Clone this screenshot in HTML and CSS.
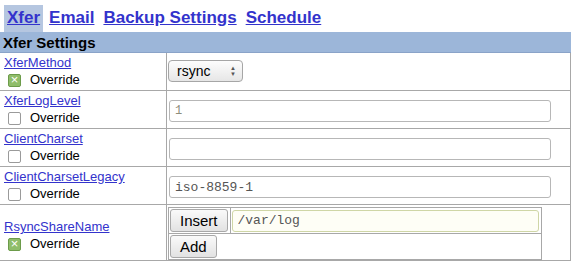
FILE: index.html
```html
<!DOCTYPE html>
<html lang="en">
<head>
    <meta charset="UTF-8">
    <title>Xfer Settings</title>
    <link rel="stylesheet" href="styles.css">
</head>
<body>
    <div class="tabs">
        <a href="#" class="tab active">Xfer</a>
        <a href="#" class="tab">Email</a>
        <a href="#" class="tab">Backup Settings</a>
        <a href="#" class="tab">Schedule</a>
    </div>

    <table class="settings">
        <tr><th colspan="2">Xfer Settings</th></tr>
        <tr>
            <td class="name">
                <a href="#">XferMethod</a>
                <label class="override"><span class="cb checked">&#215;</span>Override</label>
            </td>
            <td class="value">
                <div class="select"><span>rsync</span><span class="arrows">&#9650;<br>&#9660;</span></div>
            </td>
        </tr>
        <tr>
            <td class="name">
                <a href="#">XferLogLevel</a>
                <label class="override"><span class="cb"></span>Override</label>
            </td>
            <td class="value"><input type="text" class="field faded" value="1"></td>
        </tr>
        <tr>
            <td class="name">
                <a href="#">ClientCharset</a>
                <label class="override"><span class="cb"></span>Override</label>
            </td>
            <td class="value"><input type="text" class="field" value=""></td>
        </tr>
        <tr>
            <td class="name">
                <a href="#">ClientCharsetLegacy</a>
                <label class="override"><span class="cb"></span>Override</label>
            </td>
            <td class="value"><input type="text" class="field" value="iso-8859-1"></td>
        </tr>
        <tr>
            <td class="name tall">
                <a href="#">RsyncShareName</a>
                <label class="override"><span class="cb checked">&#215;</span>Override</label>
            </td>
            <td class="value list">
                <table class="inner">
                    <tr>
                        <td class="btncell"><button>Insert</button></td>
                        <td><input type="text" class="field short focus" value="/var/log"></td>
                    </tr>
                    <tr>
                        <td colspan="2" class="btncell"><button>Add</button></td>
                    </tr>
                </table>
            </td>
        </tr>
    </table>
</body>
</html>
```

FILE: styles.css
```css
body { margin: 0; font-family: "Liberation Sans", Arial, sans-serif; background: #fff; color: #000; }
a { color: #3333cc; }

.tabs { display: flex; gap: 3px; padding: 5px 0 0 4px; height: 27px; }
.tab { font-size: 17px; font-weight: bold; line-height: 25px; padding: 0 3px; }
.active { background: #b5c6e0; }

.settings { border-collapse: collapse; width: 100%; }
.settings th { background: #9cb6d9; text-align: left; font-size: 15px; padding: 1px 3px; height: 18px; border-bottom: 1px solid #8aa3c8; }
.settings td { border: 1px solid #a8a8a8; border-left: none; vertical-align: top; }
.name { width: 159px; padding: 2px 3px 0 4px; height: 35px; font-size: 13px; }
.name a { display: block; line-height: 15px; }
.tall { vertical-align: middle !important; padding-top: 6px; }
.override { display: flex; align-items: center; gap: 9px; margin: 2px 0 0 4px; line-height: 16px; }

.cb { width: 13px; height: 13px; border: 1px solid #9a9a9a; border-radius: 2px; background: #fff; box-sizing: border-box; display: inline-block; font-size: 13px; line-height: 10px; text-align: center; }
.cb.checked { background: #8fbd6a; border-color: #6c9b4a; color: #fff; }

.value { padding: 6px 2px 0 1px; }
.select { display: inline-flex; align-items: center; justify-content: space-between; width: 75px; height: 22px; box-sizing: border-box; margin-top: 1px; padding: 0 6px 0 8px; border: 1px solid #a6a6a6; border-radius: 4px; background: linear-gradient(#fdfdfd, #e6e6e6); font-size: 14px; }
.arrows { font-size: 6px; line-height: 6px; color: #555; text-align: center; }

.field { display: block; width: 382px; height: 22px; box-sizing: border-box; margin: 3px 0 0 1px; padding: 0 5px; border: 1px solid #b7b7b7; border-radius: 3px; font-family: "Liberation Mono", monospace; font-size: 13px; color: #555; background: #fff; }
.faded { color: #8d8d7a; font-size: 12px; }

.list { padding-top: 2px; }
.inner { border-collapse: collapse; border: 1px solid #a8a8a8; width: 373px; }
.inner td { border: 1px solid #a8a8a8; border-left: none; padding: 1px 2px 1px 1px; vertical-align: middle; height: 23px; }
.inner .btncell { width: 1px; }
.inner button { font-family: "Liberation Sans", Arial, sans-serif; font-size: 15px; height: 23px; padding: 0 9px; border: 1px solid #a8a8a8; border-radius: 3px; background: linear-gradient(#fafafa, #e2e2e2); }
.short { width: 307px; margin: 0; }
.focus { border-color: #cfd6a6; background: #fefef6; }
```
